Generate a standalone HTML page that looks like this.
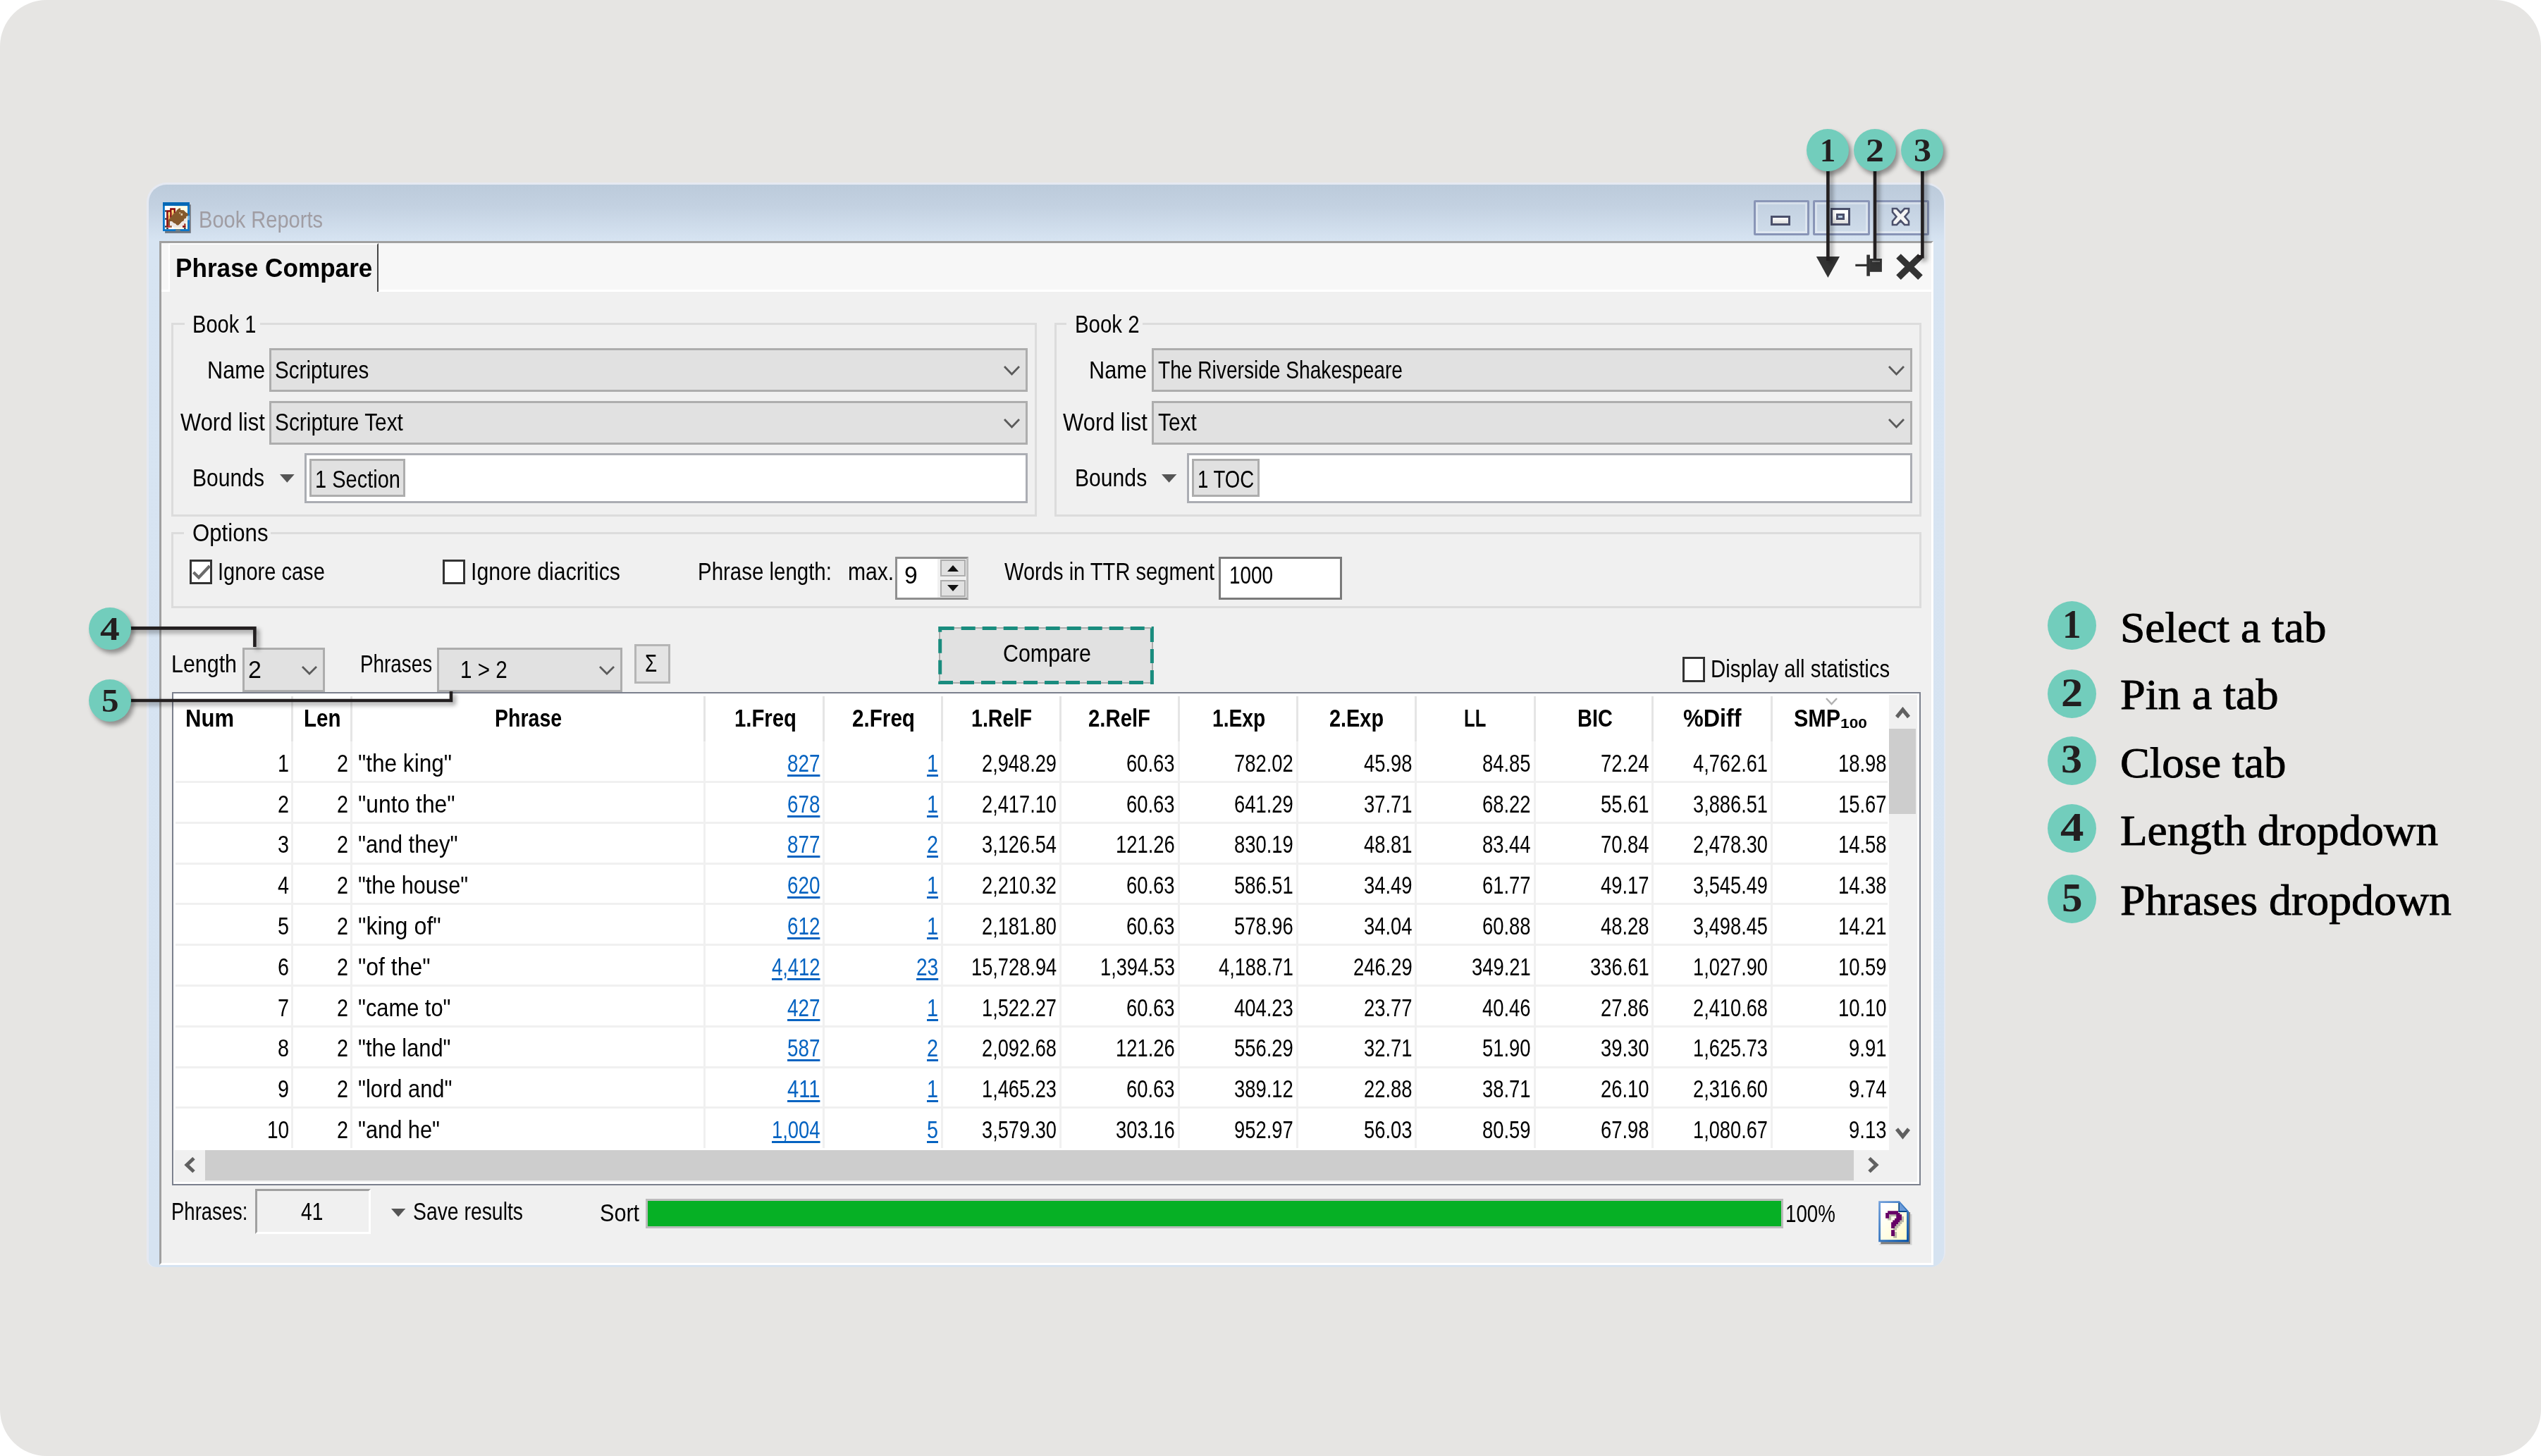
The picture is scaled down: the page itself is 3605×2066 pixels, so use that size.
<!DOCTYPE html>
<html lang="en"><head><meta charset="utf-8"><title>Book Reports - Phrase Compare</title>
<style>
html,body{margin:0;padding:0;background:#fff;}
body{width:3605px;height:2066px;overflow:hidden;font-family:"Liberation Sans",sans-serif;color:#000;}
#page{position:relative;width:3605px;height:2066px;background:#e6e5e3;border-radius:66px;overflow:hidden;}
#page div,#page span,#page svg{position:absolute;box-sizing:border-box;}
.t{white-space:nowrap;line-height:1;transform-origin:0 0;font-family:"Liberation Sans",sans-serif;}
.b{font-weight:bold;}
.sf{font-family:"Liberation Serif",serif;}
.lnk{color:#0563c1;text-decoration:underline;text-decoration-thickness:2.5px;text-underline-offset:4px;}
.combo{background:#e1e1e1;border:3px solid #adadad;}
.edit{background:#fff;border:3px solid #abadb3;}
.grp{border:3px solid #dcdcdc;}
.glab{background:#f0f0f0;}
.chk{background:#fff;border:3px solid #333;}
.vs{width:3px;background:#e5e5e5;}
.vs2{width:3px;background:#f0f0f0;}
.hs{height:3px;background:#f0f0f0;}
.num{border-radius:50%;background:#72cdbc;}
.sh{box-shadow:4px 5px 6px rgba(0,0,0,.38);}

</style></head>
<body>
<div id="page">
<!-- window frame + title bar -->
<div style="left:208.3px;top:259px;width:2551.9px;height:1539px;border-radius:28px 28px 22px 12px;background:#e5e9f2;"></div>
<div style="left:210.7px;top:262px;width:2547.2px;height:1536px;border-radius:25px 25px 20px 10px;background:linear-gradient(to bottom,#bccbdb 0,#c3d1e1 30px,#d7e4f2 80px,#d6e3f1 100%);"></div>
<div style="left:226px;top:342px;width:2517px;height:1453px;background:#f0f0f0;border-left:3px solid #a0a0a0;border-top:3px solid #a0a0a0;border-right:3px solid #fff;border-bottom:3px solid #fff;"></div>
<svg style="left:231.06px;top:286.86px" width="39.97" height="44.09" viewBox="220 215 970 1070">
<rect x="295" y="295" width="890" height="985" fill="#6f7680"/>
<rect x="220" y="215" width="918" height="995" fill="#0a76cb"/>
<rect x="220" y="215" width="918" height="125" fill="#0068b6"/>
<rect x="290" y="340" width="780" height="800" fill="#fffde8"/>
<rect x="290" y="340" width="330" height="800" fill="#fff"/>
<rect x="1070" y="680" width="68" height="150" fill="#7ab4e0"/>
<path d="M345 490 H465 V415 H655 V600 H590 V480 H530 V750 H465 V550 H410 V1085 H345 Z" fill="#8a0c0c"/>
<rect x="410" y="560" width="55" height="270" fill="#f6b860"/><rect x="410" y="560" width="55" height="110" fill="#ffe680"/>
<rect x="530" y="480" width="60" height="200" fill="#f8c060"/><rect x="530" y="480" width="60" height="90" fill="#ffe680"/>
<path d="M410 830 L465 760 L590 610 L655 560 L700 490 L780 420 L830 420 L830 480 L940 490 L1010 560 L1070 600 L1100 640 L1070 690 L1030 700 L1030 760 L960 790 L940 860 L880 880 L820 950 L760 1010 L700 1010 L650 950 L590 930 L530 870 L465 870 L465 1020 L410 1020 Z" fill="#85592c"/>
<path d="M465 870 L530 870 L590 930 L650 950 L700 1010 L760 1010 L820 950 L880 880 L940 860 L960 790 L1030 760 L1050 760 L1050 900 L1010 900 L940 1010 L880 1085 L590 1085 L530 1010 L465 1010 Z" fill="#ece7e3"/>
<rect x="840" y="600" width="60" height="70" fill="#e4d2b4"/><rect x="780" y="560" width="50" height="50" fill="#c9aa80"/>
<rect x="415" y="1020" width="50" height="65" fill="#e02020"/><rect x="465" y="1020" width="65" height="65" fill="#9a5a30"/>
<rect x="900" y="1020" width="110" height="65" fill="#8a0c0c"/><rect x="950" y="950" width="60" height="70" fill="#a04030"/>
<rect x="295" y="490" width="50" height="55" fill="#2a2a2a"/><rect x="295" y="760" width="50" height="55" fill="#2a2a2a"/><rect x="295" y="1025" width="50" height="55" fill="#2a2a2a"/>
<rect x="345" y="1095" width="65" height="45" fill="#2a2a2a"/><rect x="950" y="1095" width="60" height="45" fill="#2a2a2a"/>
<rect x="660" y="1140" width="160" height="70" fill="#6a7f8a"/>
</svg>
<span class="t" style="left:282.0px;top:294.2px;font-size:34px;transform:scaleX(0.8544);color:#a09da3;">Book Reports</span>
<div style="left:2487.5px;top:284.2px;width:79.3px;height:49.6px;border:3px solid rgba(126,138,174,.85);border-radius:2px;background:linear-gradient(to bottom,#c2d0e0,#cfdcea);"></div>
<div style="left:2490.5px;top:287.2px;width:73.3px;height:43.6px;border:3px solid rgba(255,255,255,.35);"></div>
<div style="left:2572.1px;top:284.2px;width:80.7px;height:49.6px;border:3px solid rgba(126,138,174,.85);border-radius:2px;background:linear-gradient(to bottom,#c2d0e0,#cfdcea);"></div>
<div style="left:2575.1px;top:287.2px;width:74.7px;height:43.6px;border:3px solid rgba(255,255,255,.35);"></div>
<div style="left:2657.7px;top:284.2px;width:79.7px;height:49.6px;border:3px solid rgba(126,138,174,.85);border-radius:2px;background:linear-gradient(to bottom,#c2d0e0,#cfdcea);"></div>
<div style="left:2660.7px;top:287.2px;width:73.7px;height:43.6px;border:3px solid rgba(255,255,255,.35);"></div>
<div style="left:2512.3px;top:306px;width:27.6px;height:13.8px;border:3px solid #4b506b;background:linear-gradient(#fff,#dcdcdc);"></div>
<div style="left:2597.3px;top:295px;width:27.6px;height:24.8px;border:3px solid #4b506b;background:linear-gradient(#fff 40%,#dcdcdc);"></div>
<div style="left:2605px;top:303px;width:12.2px;height:9px;border:3px solid #4b506b;background:#b8cde4;"></div>
<svg style="left:2681px;top:293px" width="31" height="29" viewBox="0 0 31 29"><path d="M4 3 H10 L15.5 9 L21 3 H27 V8 L21.5 14.5 L27 21 V26 H21 L15.5 20 L10 26 H4 V21 L9.5 14.5 L4 8 Z" fill="#f4f4f4" stroke="#4b506b" stroke-width="2.6" stroke-linejoin="miter"/></svg>
<!-- tab strip -->
<div style="left:229px;top:345px;width:2511px;height:66px;background:#f7f7f7;"></div>
<div style="left:229px;top:411px;width:2511px;height:3px;background:#fff;"></div>
<div style="left:239.3px;top:345px;width:297.4px;height:69px;background:#f0f0f0;border-left:2px solid #fff;border-top:2.5px solid #fff;border-right:2.6px solid #454545;"></div>
<span class="t b" style="left:248.9px;top:363.4px;font-size:36.6px;transform:scaleX(0.9611);">Phrase Compare</span>
<svg style="left:2570px;top:355px" width="170" height="48" viewBox="2570 355 170 48">
<path d="M2576.8 364 H2610 L2593.4 394 Z" fill="#333"/>
<rect x="2632.3" y="374.8" width="17" height="3.2" fill="#333"/><rect x="2648.3" y="361.5" width="4.6" height="30.2" fill="#333"/><rect x="2652.5" y="367" width="17.4" height="18.8" fill="#333"/><rect x="2656" y="370" width="11" height="1.8" fill="#777"/>
<path d="M2693.5 363.5 L2724.5 393.7 M2724.5 363.5 L2693.5 393.7" stroke="#333" stroke-width="9.4" stroke-linecap="butt"/>
</svg>
<!-- group boxes: Book 1 / Book 2 / Options -->
<div class="grp" style="left:243.3px;top:458.2px;width:1228.2px;height:275px;"></div>
<div class="glab" style="left:262px;top:456.2px;width:107px;height:8px;"></div>
<div class="grp" style="left:1495.8px;top:458.2px;width:1230.5px;height:275px;"></div>
<div class="glab" style="left:1512.5px;top:456.2px;width:108.1px;height:8px;"></div>
<div class="grp" style="left:243.3px;top:755px;width:2483px;height:108.2px;"></div>
<div class="glab" style="left:260.7px;top:753px;width:123px;height:8px;"></div>
<span class="t" style="left:273.4px;top:443.2px;font-size:34.5px;transform:scaleX(0.8425);">Book 1</span>
<span class="t" style="left:1525.2px;top:443.2px;font-size:34.5px;transform:scaleX(0.8527);">Book 2</span>
<span class="t" style="left:273.4px;top:739.0px;font-size:34.5px;transform:scaleX(0.9041);">Options</span>
<div class="combo" style="left:382.2px;top:494.4px;width:1075.4px;height:62px;"></div>
<svg style="left:1420.8px;top:516.1px" width="29" height="19" viewBox="-4 -4 29 19"><path d="M0 0 L10.5 11 L21 0" fill="none" stroke="#5a5a5a" stroke-width="2.8"/></svg>
<div class="combo" style="left:382.2px;top:568.8px;width:1075.4px;height:62px;"></div>
<svg style="left:1420.8px;top:590.5px" width="29" height="19" viewBox="-4 -4 29 19"><path d="M0 0 L10.5 11 L21 0" fill="none" stroke="#5a5a5a" stroke-width="2.8"/></svg>
<div class="edit" style="left:431.8px;top:642.5px;width:1025.8px;height:71.5px;"></div>
<div class="combo" style="left:438.9px;top:651.3px;width:136.1px;height:54.2px;"></div>
<svg style="left:397px;top:673.3px" width="20.7" height="11.7" viewBox="0 0 20.7 11.7"><path d="M0 0 H20.7 L10.35 11.7 Z" fill="#555"/></svg>
<span class="t" style="left:293.5px;top:508.4px;font-size:34.5px;transform:scaleX(0.8910);">Name</span>
<span class="t" style="left:390.3px;top:508.4px;font-size:34.5px;transform:scaleX(0.8589);">Scriptures</span>
<span class="t" style="left:255.7px;top:582.1px;font-size:34.5px;transform:scaleX(0.8970);">Word list</span>
<span class="t" style="left:390.3px;top:582.1px;font-size:34.5px;transform:scaleX(0.8650);">Scripture Text</span>
<span class="t" style="left:273.4px;top:660.8px;font-size:34.5px;transform:scaleX(0.8725);">Bounds</span>
<span class="t" style="left:447.0px;top:662.8px;font-size:34.5px;transform:scaleX(0.8404);">1 Section</span>
<div class="combo" style="left:1634px;top:494.4px;width:1079.2px;height:62px;"></div>
<svg style="left:2675.7px;top:516.1px" width="29" height="19" viewBox="-4 -4 29 19"><path d="M0 0 L10.5 11 L21 0" fill="none" stroke="#5a5a5a" stroke-width="2.8"/></svg>
<div class="combo" style="left:1634px;top:568.8px;width:1079.2px;height:62px;"></div>
<svg style="left:2675.7px;top:590.5px" width="29" height="19" viewBox="-4 -4 29 19"><path d="M0 0 L10.5 11 L21 0" fill="none" stroke="#5a5a5a" stroke-width="2.8"/></svg>
<div class="edit" style="left:1684.3px;top:642.5px;width:1028.9px;height:71.5px;"></div>
<div class="combo" style="left:1690.7px;top:651.3px;width:96.3px;height:54.2px;"></div>
<svg style="left:1647.9px;top:673.3px" width="21.2" height="11.7" viewBox="0 0 21.2 11.7"><path d="M0 0 H21.2 L10.6 11.7 Z" fill="#555"/></svg>
<span class="t" style="left:1545.4px;top:508.4px;font-size:34.5px;transform:scaleX(0.8910);">Name</span>
<span class="t" style="left:1642.8px;top:508.4px;font-size:34.5px;transform:scaleX(0.8151);">The Riverside Shakespeare</span>
<span class="t" style="left:1507.5px;top:582.1px;font-size:34.5px;transform:scaleX(0.8977);">Word list</span>
<span class="t" style="left:1642.8px;top:582.1px;font-size:34.5px;transform:scaleX(0.8644);">Text</span>
<span class="t" style="left:1525.2px;top:660.8px;font-size:34.5px;transform:scaleX(0.8734);">Bounds</span>
<span class="t" style="left:1698.8px;top:662.8px;font-size:34.5px;transform:scaleX(0.7991);">1 TOC</span>
<div class="chk" style="left:268.9px;top:794.4px;width:32px;height:34.7px;"></div>
<svg style="left:272px;top:799px" width="28" height="26" viewBox="0 0 28 26"><path d="M2.5 13 L10 20.5 L25.5 4" fill="none" stroke="#6b6b6b" stroke-width="4.2"/></svg>
<div class="chk" style="left:628.1px;top:794.4px;width:32.2px;height:34.7px;"></div>
<span class="t" style="left:308.8px;top:794.2px;font-size:34.5px;transform:scaleX(0.8419);">Ignore case</span>
<span class="t" style="left:667.7px;top:794.2px;font-size:34.5px;transform:scaleX(0.8774);">Ignore diacritics</span>
<span class="t" style="left:990.0px;top:793.9px;font-size:34.5px;transform:scaleX(0.8535);">Phrase length:</span>
<span class="t" style="left:1202.5px;top:793.9px;font-size:34.5px;transform:scaleX(0.8721);">max.</span>
<div style="left:1270.1px;top:789.7px;width:104.3px;height:61.3px;border:3px solid #8f8f8f;border-right-color:#bdbdbd;background:#fff;"></div>
<div style="left:1330px;top:792.7px;width:41.4px;height:55.3px;background:#f0f0f0;"></div>
<div style="left:1333.5px;top:794px;width:36.5px;height:24px;background:#e1e1e1;border:2px solid #adadad;"></div>
<div style="left:1333.5px;top:822.5px;width:36.5px;height:24px;background:#e1e1e1;border:2px solid #adadad;"></div>
<svg style="left:1344px;top:802px" width="16" height="9" viewBox="0 0 16 9"><path d="M0 9 H16 L8 0 Z" fill="#111"/></svg>
<svg style="left:1344px;top:830px" width="16" height="9" viewBox="0 0 16 9"><path d="M0 0 H16 L8 9 Z" fill="#111"/></svg>
<span class="t" style="left:1283.2px;top:799.3px;font-size:34.5px;transform:scaleX(0.9746);">9</span>
<span class="t" style="left:1424.9px;top:793.8px;font-size:34.5px;transform:scaleX(0.8434);">Words in TTR segment</span>
<div style="left:1729.4px;top:789.7px;width:175.1px;height:61.3px;border:3px solid #7a7a7a;background:#fff;"></div>
<span class="t" style="left:1743.6px;top:798.8px;font-size:34.5px;transform:scaleX(0.8091);">1000</span>
<!-- toolbar row: Length / Phrases / Compare -->
<span class="t" style="left:243.0px;top:924.8px;font-size:34.5px;transform:scaleX(0.8813);">Length</span>
<div class="combo" style="left:344.4px;top:918.6px;width:116.9px;height:63.6px;"></div>
<svg style="left:425px;top:941.5px" width="28" height="18" viewBox="-4 -4 28 18"><path d="M0 0 L10 10 L20 0" fill="none" stroke="#5a5a5a" stroke-width="2.8"/></svg>
<span class="t" style="left:351.8px;top:933.0px;font-size:34.5px;transform:scaleX(0.9850);">2</span>
<span class="t" style="left:511.2px;top:924.8px;font-size:34.5px;transform:scaleX(0.8075);">Phrases</span>
<div class="combo" style="left:620px;top:918.6px;width:262.9px;height:63.6px;"></div>
<svg style="left:846.9px;top:941.5px" width="28" height="18" viewBox="-4 -4 28 18"><path d="M0 0 L10 10 L20 0" fill="none" stroke="#5a5a5a" stroke-width="2.8"/></svg>
<span class="t" style="left:652.9px;top:933.0px;font-size:34.5px;transform:scaleX(0.8584);">1 &gt; 2</span>
<div style="left:899.5px;top:913.7px;width:51.4px;height:56.7px;background:#e4e4e4;border:3px solid #b5b5b5;"></div>
<span class="t" style="left:915.0px;top:924.2px;font-size:34.5px;transform:scaleX(0.8064);">Σ</span>
<div style="left:1332.4px;top:890.3px;width:303.3px;height:79.5px;background:#e1e1e1;border:2.6px solid #adadad;"></div>
<svg style="left:1328px;top:886px" width="312" height="88" viewBox="1328 886 312 88"><rect x="1333.7" y="891.6" width="300.7" height="76.9" fill="none" stroke="#198c7e" stroke-width="5" stroke-dasharray="20 10" stroke-dashoffset="0"/></svg>
<span class="t" style="left:1422.5px;top:910.3px;font-size:34.5px;transform:scaleX(0.8809);">Compare</span>
<div class="chk" style="left:2387.1px;top:932px;width:32px;height:35.9px;"></div>
<span class="t" style="left:2427.2px;top:932.3px;font-size:34.5px;transform:scaleX(0.8499);">Display all statistics</span>
<!-- results table -->
<div style="left:243.8px;top:982.2px;width:2481.4px;height:699.6px;background:#fff;border:2.4px solid #7b808d;"></div>
<div class="vs" style="left:413.4px;top:988px;width:3px;height:64px;"></div>
<div class="vs2" style="left:413.4px;top:1052px;width:3px;height:577px;"></div>
<div class="vs" style="left:496.7px;top:988px;width:3px;height:64px;"></div>
<div class="vs2" style="left:496.7px;top:1052px;width:3px;height:577px;"></div>
<div class="vs" style="left:998.4px;top:988px;width:3px;height:64px;"></div>
<div class="vs2" style="left:998.4px;top:1052px;width:3px;height:577px;"></div>
<div class="vs" style="left:1166.9px;top:988px;width:3px;height:64px;"></div>
<div class="vs2" style="left:1166.9px;top:1052px;width:3px;height:577px;"></div>
<div class="vs" style="left:1335.2px;top:988px;width:3px;height:64px;"></div>
<div class="vs2" style="left:1335.2px;top:1052px;width:3px;height:577px;"></div>
<div class="vs" style="left:1503px;top:988px;width:3px;height:64px;"></div>
<div class="vs2" style="left:1503px;top:1052px;width:3px;height:577px;"></div>
<div class="vs" style="left:1671px;top:988px;width:3px;height:64px;"></div>
<div class="vs2" style="left:1671px;top:1052px;width:3px;height:577px;"></div>
<div class="vs" style="left:1839.3px;top:988px;width:3px;height:64px;"></div>
<div class="vs2" style="left:1839.3px;top:1052px;width:3px;height:577px;"></div>
<div class="vs" style="left:2007.4px;top:988px;width:3px;height:64px;"></div>
<div class="vs2" style="left:2007.4px;top:1052px;width:3px;height:577px;"></div>
<div class="vs" style="left:2175.5px;top:988px;width:3px;height:64px;"></div>
<div class="vs2" style="left:2175.5px;top:1052px;width:3px;height:577px;"></div>
<div class="vs" style="left:2343.3px;top:988px;width:3px;height:64px;"></div>
<div class="vs2" style="left:2343.3px;top:1052px;width:3px;height:577px;"></div>
<div class="vs" style="left:2512px;top:988px;width:3px;height:64px;"></div>
<div class="vs2" style="left:2512px;top:1052px;width:3px;height:577px;"></div>
<div class="hs" style="left:249px;top:1108px;width:2429px;height:3px;"></div>
<div class="hs" style="left:249px;top:1165.8px;width:2429px;height:3px;"></div>
<div class="hs" style="left:249px;top:1223.6px;width:2429px;height:3px;"></div>
<div class="hs" style="left:249px;top:1281.4px;width:2429px;height:3px;"></div>
<div class="hs" style="left:249px;top:1339.2px;width:2429px;height:3px;"></div>
<div class="hs" style="left:249px;top:1397px;width:2429px;height:3px;"></div>
<div class="hs" style="left:249px;top:1454.8px;width:2429px;height:3px;"></div>
<div class="hs" style="left:249px;top:1512.6px;width:2429px;height:3px;"></div>
<div class="hs" style="left:249px;top:1570.4px;width:2429px;height:3px;"></div>
<div style="left:2680px;top:986px;width:39.5px;height:690.5px;background:#f0f0f0;"></div>
<div style="left:2680px;top:1034.2px;width:38px;height:120.9px;background:#cdcdcd;"></div>
<svg style="left:2686.5px;top:1002.75px" width="25" height="18.5" viewBox="-4 -4 25 18.5"><path d="M0 10.5 L8.5 0 L17 10.5" fill="none" stroke="#606060" stroke-width="5.2"/></svg>
<svg style="left:2687px;top:1598.25px" width="25" height="18.5" viewBox="-4 -4 25 18.5"><path d="M0 0 L8.5 10.5 L17 0" fill="none" stroke="#606060" stroke-width="5.2"/></svg>
<div style="left:247px;top:1631.5px;width:2440px;height:45px;background:#f0f0f0;"></div>
<div style="left:291px;top:1632.1px;width:2339px;height:42.5px;background:#cdcdcd;"></div>
<svg style="left:258px;top:1640px" width="24" height="26" viewBox="0 0 24 26"><path d="M17 3.5 L7 13 L17 22.5" fill="none" stroke="#606060" stroke-width="5"/></svg>
<svg style="left:2646px;top:1640px" width="24" height="26" viewBox="0 0 24 26"><path d="M6 3.5 L16 13 L6 22.5" fill="none" stroke="#606060" stroke-width="5"/></svg>
<svg style="left:2586.9px;top:986.5px" width="23" height="16" viewBox="-4 -4 23 16"><path d="M0 0 L7.5 8 L15 0" fill="none" stroke="#b0b0b0" stroke-width="2.4"/></svg>
<span class="t b" style="left:263.0px;top:1001.8px;font-size:34.5px;transform:scaleX(0.8999);">Num</span>
<span class="t b" style="left:431.1px;top:1001.8px;font-size:34.5px;transform:scaleX(0.8575);">Len</span>
<span class="t b" style="left:702.1px;top:1001.8px;font-size:34.5px;transform:scaleX(0.8264);">Phrase</span>
<span class="t b" style="left:1042.3px;top:1001.8px;font-size:34.5px;transform:scaleX(0.8499);">1.Freq</span>
<span class="t b" style="left:1208.8px;top:1001.8px;font-size:34.5px;transform:scaleX(0.8595);">2.Freq</span>
<span class="t b" style="left:1378.1px;top:1001.8px;font-size:34.5px;transform:scaleX(0.8296);">1.RelF</span>
<span class="t b" style="left:1544.2px;top:1001.8px;font-size:34.5px;transform:scaleX(0.8499);">2.RelF</span>
<span class="t b" style="left:1719.9px;top:1001.8px;font-size:34.5px;transform:scaleX(0.8181);">1.Exp</span>
<span class="t b" style="left:1886.1px;top:1001.8px;font-size:34.5px;transform:scaleX(0.8376);">2.Exp</span>
<span class="t b" style="left:2077.3px;top:1001.8px;font-size:34.5px;transform:scaleX(0.7425);">LL</span>
<span class="t b" style="left:2237.9px;top:1001.8px;font-size:34.5px;transform:scaleX(0.8381);">BIC</span>
<span class="t b" style="left:2387.9px;top:1001.8px;font-size:34.5px;transform:scaleX(0.9370);">%Diff</span>
<span class="t b" style="left:2545.4px;top:1001.8px;font-size:34.5px;transform:scaleX(0.8854);">SMP</span>
<span class="t b" style="left:2611.1px;top:1017.6px;font-size:18.5px;transform:scaleX(1.2275);">100</span>
<span class="t" style="left:394.4px;top:1065.8px;font-size:34.5px;transform:scaleX(0.8339);">1</span>
<span class="t" style="left:477.6px;top:1065.8px;font-size:34.5px;transform:scaleX(0.8339);">2</span>
<span class="t" style="left:507.6px;top:1065.8px;font-size:34.5px;transform:scaleX(0.9152);">"the king"</span>
<span class="t lnk" style="left:1116.8px;top:1065.8px;font-size:34.5px;transform:scaleX(0.8061);">827</span>
<span class="t lnk" style="left:1315.1px;top:1065.8px;font-size:34.5px;transform:scaleX(0.8339);">1</span>
<span class="t" style="left:1393.4px;top:1065.8px;font-size:34.5px;transform:scaleX(0.7893);">2,948.29</span>
<span class="t" style="left:1598.3px;top:1065.8px;font-size:34.5px;transform:scaleX(0.7945);">60.63</span>
<span class="t" style="left:1751.4px;top:1065.8px;font-size:34.5px;transform:scaleX(0.7941);">782.02</span>
<span class="t" style="left:1934.8px;top:1065.8px;font-size:34.5px;transform:scaleX(0.7945);">45.98</span>
<span class="t" style="left:2102.9px;top:1065.8px;font-size:34.5px;transform:scaleX(0.7945);">84.85</span>
<span class="t" style="left:2270.7px;top:1065.8px;font-size:34.5px;transform:scaleX(0.7945);">72.24</span>
<span class="t" style="left:2402.0px;top:1065.8px;font-size:34.5px;transform:scaleX(0.7893);">4,762.61</span>
<span class="t" style="left:2608.0px;top:1065.8px;font-size:34.5px;transform:scaleX(0.7945);">18.98</span>
<span class="t" style="left:394.4px;top:1123.6px;font-size:34.5px;transform:scaleX(0.8339);">2</span>
<span class="t" style="left:477.6px;top:1123.6px;font-size:34.5px;transform:scaleX(0.8339);">2</span>
<span class="t" style="left:507.6px;top:1123.6px;font-size:34.5px;transform:scaleX(0.9223);">"unto the"</span>
<span class="t lnk" style="left:1116.8px;top:1123.6px;font-size:34.5px;transform:scaleX(0.8061);">678</span>
<span class="t lnk" style="left:1315.1px;top:1123.6px;font-size:34.5px;transform:scaleX(0.8339);">1</span>
<span class="t" style="left:1393.4px;top:1123.6px;font-size:34.5px;transform:scaleX(0.7893);">2,417.10</span>
<span class="t" style="left:1598.3px;top:1123.6px;font-size:34.5px;transform:scaleX(0.7945);">60.63</span>
<span class="t" style="left:1751.4px;top:1123.6px;font-size:34.5px;transform:scaleX(0.7941);">641.29</span>
<span class="t" style="left:1934.8px;top:1123.6px;font-size:34.5px;transform:scaleX(0.7945);">37.71</span>
<span class="t" style="left:2102.9px;top:1123.6px;font-size:34.5px;transform:scaleX(0.7945);">68.22</span>
<span class="t" style="left:2270.7px;top:1123.6px;font-size:34.5px;transform:scaleX(0.7945);">55.61</span>
<span class="t" style="left:2402.0px;top:1123.6px;font-size:34.5px;transform:scaleX(0.7893);">3,886.51</span>
<span class="t" style="left:2608.0px;top:1123.6px;font-size:34.5px;transform:scaleX(0.7945);">15.67</span>
<span class="t" style="left:394.4px;top:1181.4px;font-size:34.5px;transform:scaleX(0.8339);">3</span>
<span class="t" style="left:477.6px;top:1181.4px;font-size:34.5px;transform:scaleX(0.8339);">2</span>
<span class="t" style="left:507.6px;top:1181.4px;font-size:34.5px;transform:scaleX(0.9021);">"and they"</span>
<span class="t lnk" style="left:1116.8px;top:1181.4px;font-size:34.5px;transform:scaleX(0.8061);">877</span>
<span class="t lnk" style="left:1315.1px;top:1181.4px;font-size:34.5px;transform:scaleX(0.8339);">2</span>
<span class="t" style="left:1393.4px;top:1181.4px;font-size:34.5px;transform:scaleX(0.7893);">3,126.54</span>
<span class="t" style="left:1583.1px;top:1181.4px;font-size:34.5px;transform:scaleX(0.7941);">121.26</span>
<span class="t" style="left:1751.4px;top:1181.4px;font-size:34.5px;transform:scaleX(0.7941);">830.19</span>
<span class="t" style="left:1934.8px;top:1181.4px;font-size:34.5px;transform:scaleX(0.7945);">48.81</span>
<span class="t" style="left:2102.9px;top:1181.4px;font-size:34.5px;transform:scaleX(0.7945);">83.44</span>
<span class="t" style="left:2270.7px;top:1181.4px;font-size:34.5px;transform:scaleX(0.7945);">70.84</span>
<span class="t" style="left:2402.0px;top:1181.4px;font-size:34.5px;transform:scaleX(0.7893);">2,478.30</span>
<span class="t" style="left:2608.0px;top:1181.4px;font-size:34.5px;transform:scaleX(0.7945);">14.58</span>
<span class="t" style="left:394.4px;top:1239.2px;font-size:34.5px;transform:scaleX(0.8339);">4</span>
<span class="t" style="left:477.6px;top:1239.2px;font-size:34.5px;transform:scaleX(0.8339);">2</span>
<span class="t" style="left:507.6px;top:1239.2px;font-size:34.5px;transform:scaleX(0.8861);">"the house"</span>
<span class="t lnk" style="left:1116.8px;top:1239.2px;font-size:34.5px;transform:scaleX(0.8061);">620</span>
<span class="t lnk" style="left:1315.1px;top:1239.2px;font-size:34.5px;transform:scaleX(0.8339);">1</span>
<span class="t" style="left:1393.4px;top:1239.2px;font-size:34.5px;transform:scaleX(0.7893);">2,210.32</span>
<span class="t" style="left:1598.3px;top:1239.2px;font-size:34.5px;transform:scaleX(0.7945);">60.63</span>
<span class="t" style="left:1751.4px;top:1239.2px;font-size:34.5px;transform:scaleX(0.7941);">586.51</span>
<span class="t" style="left:1934.8px;top:1239.2px;font-size:34.5px;transform:scaleX(0.7945);">34.49</span>
<span class="t" style="left:2102.9px;top:1239.2px;font-size:34.5px;transform:scaleX(0.7945);">61.77</span>
<span class="t" style="left:2270.7px;top:1239.2px;font-size:34.5px;transform:scaleX(0.7945);">49.17</span>
<span class="t" style="left:2402.0px;top:1239.2px;font-size:34.5px;transform:scaleX(0.7893);">3,545.49</span>
<span class="t" style="left:2608.0px;top:1239.2px;font-size:34.5px;transform:scaleX(0.7945);">14.38</span>
<span class="t" style="left:394.4px;top:1297.0px;font-size:34.5px;transform:scaleX(0.8339);">5</span>
<span class="t" style="left:477.6px;top:1297.0px;font-size:34.5px;transform:scaleX(0.8339);">2</span>
<span class="t" style="left:507.6px;top:1297.0px;font-size:34.5px;transform:scaleX(0.9339);">"king of"</span>
<span class="t lnk" style="left:1116.8px;top:1297.0px;font-size:34.5px;transform:scaleX(0.8061);">612</span>
<span class="t lnk" style="left:1315.1px;top:1297.0px;font-size:34.5px;transform:scaleX(0.8339);">1</span>
<span class="t" style="left:1393.4px;top:1297.0px;font-size:34.5px;transform:scaleX(0.7893);">2,181.80</span>
<span class="t" style="left:1598.3px;top:1297.0px;font-size:34.5px;transform:scaleX(0.7945);">60.63</span>
<span class="t" style="left:1751.4px;top:1297.0px;font-size:34.5px;transform:scaleX(0.7941);">578.96</span>
<span class="t" style="left:1934.8px;top:1297.0px;font-size:34.5px;transform:scaleX(0.7945);">34.04</span>
<span class="t" style="left:2102.9px;top:1297.0px;font-size:34.5px;transform:scaleX(0.7945);">60.88</span>
<span class="t" style="left:2270.7px;top:1297.0px;font-size:34.5px;transform:scaleX(0.7945);">48.28</span>
<span class="t" style="left:2402.0px;top:1297.0px;font-size:34.5px;transform:scaleX(0.7893);">3,498.45</span>
<span class="t" style="left:2608.0px;top:1297.0px;font-size:34.5px;transform:scaleX(0.7945);">14.21</span>
<span class="t" style="left:394.4px;top:1354.8px;font-size:34.5px;transform:scaleX(0.8339);">6</span>
<span class="t" style="left:477.6px;top:1354.8px;font-size:34.5px;transform:scaleX(0.8339);">2</span>
<span class="t" style="left:507.6px;top:1354.8px;font-size:34.5px;transform:scaleX(0.9250);">"of the"</span>
<span class="t lnk" style="left:1094.6px;top:1354.8px;font-size:34.5px;transform:scaleX(0.7945);">4,412</span>
<span class="t lnk" style="left:1299.9px;top:1354.8px;font-size:34.5px;transform:scaleX(0.8130);">23</span>
<span class="t" style="left:1378.2px;top:1354.8px;font-size:34.5px;transform:scaleX(0.7897);">15,728.94</span>
<span class="t" style="left:1560.9px;top:1354.8px;font-size:34.5px;transform:scaleX(0.7893);">1,394.53</span>
<span class="t" style="left:1729.2px;top:1354.8px;font-size:34.5px;transform:scaleX(0.7893);">4,188.71</span>
<span class="t" style="left:1919.6px;top:1354.8px;font-size:34.5px;transform:scaleX(0.7941);">246.29</span>
<span class="t" style="left:2087.7px;top:1354.8px;font-size:34.5px;transform:scaleX(0.7941);">349.21</span>
<span class="t" style="left:2255.5px;top:1354.8px;font-size:34.5px;transform:scaleX(0.7941);">336.61</span>
<span class="t" style="left:2402.0px;top:1354.8px;font-size:34.5px;transform:scaleX(0.7893);">1,027.90</span>
<span class="t" style="left:2608.0px;top:1354.8px;font-size:34.5px;transform:scaleX(0.7945);">10.59</span>
<span class="t" style="left:394.4px;top:1412.6px;font-size:34.5px;transform:scaleX(0.8339);">7</span>
<span class="t" style="left:477.6px;top:1412.6px;font-size:34.5px;transform:scaleX(0.8339);">2</span>
<span class="t" style="left:507.6px;top:1412.6px;font-size:34.5px;transform:scaleX(0.8932);">"came to"</span>
<span class="t lnk" style="left:1116.8px;top:1412.6px;font-size:34.5px;transform:scaleX(0.8061);">427</span>
<span class="t lnk" style="left:1315.1px;top:1412.6px;font-size:34.5px;transform:scaleX(0.8339);">1</span>
<span class="t" style="left:1393.4px;top:1412.6px;font-size:34.5px;transform:scaleX(0.7893);">1,522.27</span>
<span class="t" style="left:1598.3px;top:1412.6px;font-size:34.5px;transform:scaleX(0.7945);">60.63</span>
<span class="t" style="left:1751.4px;top:1412.6px;font-size:34.5px;transform:scaleX(0.7941);">404.23</span>
<span class="t" style="left:1934.8px;top:1412.6px;font-size:34.5px;transform:scaleX(0.7945);">23.77</span>
<span class="t" style="left:2102.9px;top:1412.6px;font-size:34.5px;transform:scaleX(0.7945);">40.46</span>
<span class="t" style="left:2270.7px;top:1412.6px;font-size:34.5px;transform:scaleX(0.7945);">27.86</span>
<span class="t" style="left:2402.0px;top:1412.6px;font-size:34.5px;transform:scaleX(0.7893);">2,410.68</span>
<span class="t" style="left:2608.0px;top:1412.6px;font-size:34.5px;transform:scaleX(0.7945);">10.10</span>
<span class="t" style="left:394.4px;top:1470.4px;font-size:34.5px;transform:scaleX(0.8339);">8</span>
<span class="t" style="left:477.6px;top:1470.4px;font-size:34.5px;transform:scaleX(0.8339);">2</span>
<span class="t" style="left:507.6px;top:1470.4px;font-size:34.5px;transform:scaleX(0.8929);">"the land"</span>
<span class="t lnk" style="left:1116.8px;top:1470.4px;font-size:34.5px;transform:scaleX(0.8061);">587</span>
<span class="t lnk" style="left:1315.1px;top:1470.4px;font-size:34.5px;transform:scaleX(0.8339);">2</span>
<span class="t" style="left:1393.4px;top:1470.4px;font-size:34.5px;transform:scaleX(0.7893);">2,092.68</span>
<span class="t" style="left:1583.1px;top:1470.4px;font-size:34.5px;transform:scaleX(0.7941);">121.26</span>
<span class="t" style="left:1751.4px;top:1470.4px;font-size:34.5px;transform:scaleX(0.7941);">556.29</span>
<span class="t" style="left:1934.8px;top:1470.4px;font-size:34.5px;transform:scaleX(0.7945);">32.71</span>
<span class="t" style="left:2102.9px;top:1470.4px;font-size:34.5px;transform:scaleX(0.7945);">51.90</span>
<span class="t" style="left:2270.7px;top:1470.4px;font-size:34.5px;transform:scaleX(0.7945);">39.30</span>
<span class="t" style="left:2402.0px;top:1470.4px;font-size:34.5px;transform:scaleX(0.7893);">1,625.73</span>
<span class="t" style="left:2623.2px;top:1470.4px;font-size:34.5px;transform:scaleX(0.7952);">9.91</span>
<span class="t" style="left:394.4px;top:1528.2px;font-size:34.5px;transform:scaleX(0.8339);">9</span>
<span class="t" style="left:477.6px;top:1528.2px;font-size:34.5px;transform:scaleX(0.8339);">2</span>
<span class="t" style="left:507.6px;top:1528.2px;font-size:34.5px;transform:scaleX(0.8949);">"lord and"</span>
<span class="t lnk" style="left:1116.8px;top:1528.2px;font-size:34.5px;transform:scaleX(0.8434);">411</span>
<span class="t lnk" style="left:1315.1px;top:1528.2px;font-size:34.5px;transform:scaleX(0.8339);">1</span>
<span class="t" style="left:1393.4px;top:1528.2px;font-size:34.5px;transform:scaleX(0.7893);">1,465.23</span>
<span class="t" style="left:1598.3px;top:1528.2px;font-size:34.5px;transform:scaleX(0.7945);">60.63</span>
<span class="t" style="left:1751.4px;top:1528.2px;font-size:34.5px;transform:scaleX(0.7941);">389.12</span>
<span class="t" style="left:1934.8px;top:1528.2px;font-size:34.5px;transform:scaleX(0.7945);">22.88</span>
<span class="t" style="left:2102.9px;top:1528.2px;font-size:34.5px;transform:scaleX(0.7945);">38.71</span>
<span class="t" style="left:2270.7px;top:1528.2px;font-size:34.5px;transform:scaleX(0.7945);">26.10</span>
<span class="t" style="left:2402.0px;top:1528.2px;font-size:34.5px;transform:scaleX(0.7893);">2,316.60</span>
<span class="t" style="left:2623.2px;top:1528.2px;font-size:34.5px;transform:scaleX(0.7952);">9.74</span>
<span class="t" style="left:379.2px;top:1586.0px;font-size:34.5px;transform:scaleX(0.8130);">10</span>
<span class="t" style="left:477.6px;top:1586.0px;font-size:34.5px;transform:scaleX(0.8339);">2</span>
<span class="t" style="left:507.6px;top:1586.0px;font-size:34.5px;transform:scaleX(0.8922);">"and he"</span>
<span class="t lnk" style="left:1094.6px;top:1586.0px;font-size:34.5px;transform:scaleX(0.7945);">1,004</span>
<span class="t lnk" style="left:1315.1px;top:1586.0px;font-size:34.5px;transform:scaleX(0.8339);">5</span>
<span class="t" style="left:1393.4px;top:1586.0px;font-size:34.5px;transform:scaleX(0.7893);">3,579.30</span>
<span class="t" style="left:1583.1px;top:1586.0px;font-size:34.5px;transform:scaleX(0.7941);">303.16</span>
<span class="t" style="left:1751.4px;top:1586.0px;font-size:34.5px;transform:scaleX(0.7941);">952.97</span>
<span class="t" style="left:1934.8px;top:1586.0px;font-size:34.5px;transform:scaleX(0.7945);">56.03</span>
<span class="t" style="left:2102.9px;top:1586.0px;font-size:34.5px;transform:scaleX(0.7945);">80.59</span>
<span class="t" style="left:2270.7px;top:1586.0px;font-size:34.5px;transform:scaleX(0.7945);">67.98</span>
<span class="t" style="left:2402.0px;top:1586.0px;font-size:34.5px;transform:scaleX(0.7893);">1,080.67</span>
<span class="t" style="left:2623.2px;top:1586.0px;font-size:34.5px;transform:scaleX(0.7952);">9.13</span>
<!-- status bar -->
<span class="t" style="left:242.8px;top:1702.1px;font-size:34.5px;transform:scaleX(0.7969);">Phrases:</span>
<div style="left:362.2px;top:1687px;width:163.7px;height:63.8px;background:#f0f0f0;border:3px solid #a0a0a0;border-right-color:#fff;border-bottom-color:#fff;"></div>
<span class="t" style="left:427.0px;top:1701.8px;font-size:34.5px;transform:scaleX(0.8156);">41</span>
<svg style="left:555.3px;top:1715.3px" width="20.2" height="11.4" viewBox="0 0 20.2 11.4"><path d="M0 0 H20.2 L10.1 11.4 Z" fill="#555"/></svg>
<span class="t" style="left:585.7px;top:1701.8px;font-size:34.5px;transform:scaleX(0.8217);">Save results</span>
<span class="t" style="left:851.4px;top:1703.8px;font-size:34.5px;transform:scaleX(0.8865);">Sort</span>
<div style="left:915.5px;top:1701.3px;width:1614.3px;height:41.5px;background:#06b025;border:3px solid #bcbcbc;"></div>
<span class="t" style="left:2532.7px;top:1704.6px;font-size:34.5px;transform:scaleX(0.8023);">100%</span>
<svg style="left:2664.9px;top:1703.7px" width="48.9" height="62.9" viewBox="180 160 890 1145">
<defs><linearGradient id="hp" x1="0" y1="0" x2="1" y2="1"><stop offset="0.15" stop-color="#fff"/><stop offset="1" stop-color="#fffbc6"/></linearGradient>
<linearGradient id="hb" x1="0" y1="0" x2="1" y2="1"><stop offset="0" stop-color="#74a2dc"/><stop offset="1" stop-color="#004fa6"/></linearGradient></defs>
<path d="M240 1220 H965 V450 H1000 V1275 H240 Z" fill="#7a7875"/><path d="M1000 500 H1045 V1300 H200 V1275 H1000 Z" fill="#bdbdbd" opacity=".6"/>
<path d="M183 163 H725 L965 435 V1220 H183 Z" fill="url(#hb)"/>
<path d="M235 215 H725 V435 H910 V1165 H235 Z" fill="url(#hp)"/>
<path d="M725 215 L910 420 H725 Z" fill="#6a9ad8"/>
<path d="M695 215 H725 V420 H910 V450 H695 Z" fill="#003f80"/>
<g fill="#a9a89a" opacity=".8" transform="translate(55 50)"><path d="M420 420 H690 V470 H730 V510 H780 V660 H730 V710 H690 V760 H640 V810 H600 V870 H510 V710 H550 V660 H600 V610 H640 V510 H455 V610 H365 V470 H420 Z"/><rect x="510" y="910" width="90" height="160"/></g>
<path d="M420 420 H690 V470 H730 V510 H780 V660 H730 V710 H690 V760 H640 V810 H600 V870 H510 V710 H550 V660 H600 V610 H640 V510 H455 V610 H365 V470 H420 Z" fill="#660066"/>
<rect x="510" y="910" width="90" height="160" fill="#660066"/>
</svg>
<!-- callout annotations + legend -->
<svg style="left:0;top:0;filter:drop-shadow(4px 4px 3px rgba(0,0,0,.42))" width="3605" height="2066" viewBox="0 0 3605 2066" fill="none" stroke="#231f20" stroke-width="4.6">
<path d="M2593.4 238 V370"/><path d="M2660 238 V368"/><path d="M2727.4 238 V364.3 H2720"/>
<path d="M180 891.4 H361.4 V918"/><path d="M180 994 H640 V981"/>
</svg>
<div class="num sh" style="left:2563.3px;top:183px;width:60px;height:60px;"></div>
<div class="num sh" style="left:2630px;top:183px;width:60px;height:60px;"></div>
<div class="num sh" style="left:2697px;top:183px;width:60px;height:60px;"></div>
<div class="num sh" style="left:125.8px;top:862.4px;width:60px;height:60px;"></div>
<div class="num sh" style="left:126px;top:964px;width:60px;height:60px;"></div>
<div class="num" style="left:2904.8px;top:853.4px;width:69px;height:69px;"></div>
<div class="num" style="left:2904.8px;top:949.8px;width:69px;height:69px;"></div>
<div class="num" style="left:2904.8px;top:1044.5px;width:69px;height:69px;"></div>
<div class="num" style="left:2904.8px;top:1140.9px;width:69px;height:69px;"></div>
<div class="num" style="left:2904.8px;top:1240.9px;width:69px;height:69px;"></div>
<span class="t b sf" style="left:2582.2px;top:189.5px;font-size:47px;transform:scaleX(0.9426);color:#231f20;">1</span>
<span class="t b sf" style="left:2647.0px;top:189.5px;font-size:47px;transform:scaleX(1.1026);color:#231f20;">2</span>
<span class="t b sf" style="left:2714.5px;top:189.5px;font-size:47px;transform:scaleX(1.0626);color:#231f20;">3</span>
<span class="t b sf" style="left:141.9px;top:868.9px;font-size:47px;transform:scaleX(1.1826);color:#231f20;">4</span>
<span class="t b sf" style="left:143.8px;top:970.5px;font-size:47px;transform:scaleX(1.0426);color:#231f20;">5</span>
<span class="t b sf" style="left:2926.0px;top:857.2px;font-size:57px;transform:scaleX(0.9351);color:#231f20;">1</span>
<span class="t b sf" style="left:2923.7px;top:953.6px;font-size:57px;transform:scaleX(1.0951);color:#231f20;">2</span>
<span class="t b sf" style="left:2924.3px;top:1048.3px;font-size:57px;transform:scaleX(1.0551);color:#231f20;">3</span>
<span class="t b sf" style="left:2922.6px;top:1144.7px;font-size:57px;transform:scaleX(1.1751);color:#231f20;">4</span>
<span class="t b sf" style="left:2924.6px;top:1244.7px;font-size:57px;transform:scaleX(1.0351);color:#231f20;">5</span>
<span class="t sf" style="left:3008.0px;top:859.9px;font-size:61px;transform:scaleX(1.0407);-webkit-text-stroke:0.9px #000;">Select a tab</span>
<span class="t sf" style="left:3008.0px;top:955.3px;font-size:61px;transform:scaleX(1.0525);-webkit-text-stroke:0.9px #000;">Pin a tab</span>
<span class="t sf" style="left:3008.0px;top:1051.8px;font-size:61px;transform:scaleX(1.0291);-webkit-text-stroke:0.9px #000;">Close tab</span>
<span class="t sf" style="left:3008.0px;top:1147.5px;font-size:61px;transform:scaleX(1.0358);-webkit-text-stroke:0.9px #000;">Length dropdown</span>
<span class="t sf" style="left:3008.0px;top:1246.8px;font-size:61px;transform:scaleX(1.0468);-webkit-text-stroke:0.9px #000;">Phrases dropdown</span>
</div>
</body></html>
